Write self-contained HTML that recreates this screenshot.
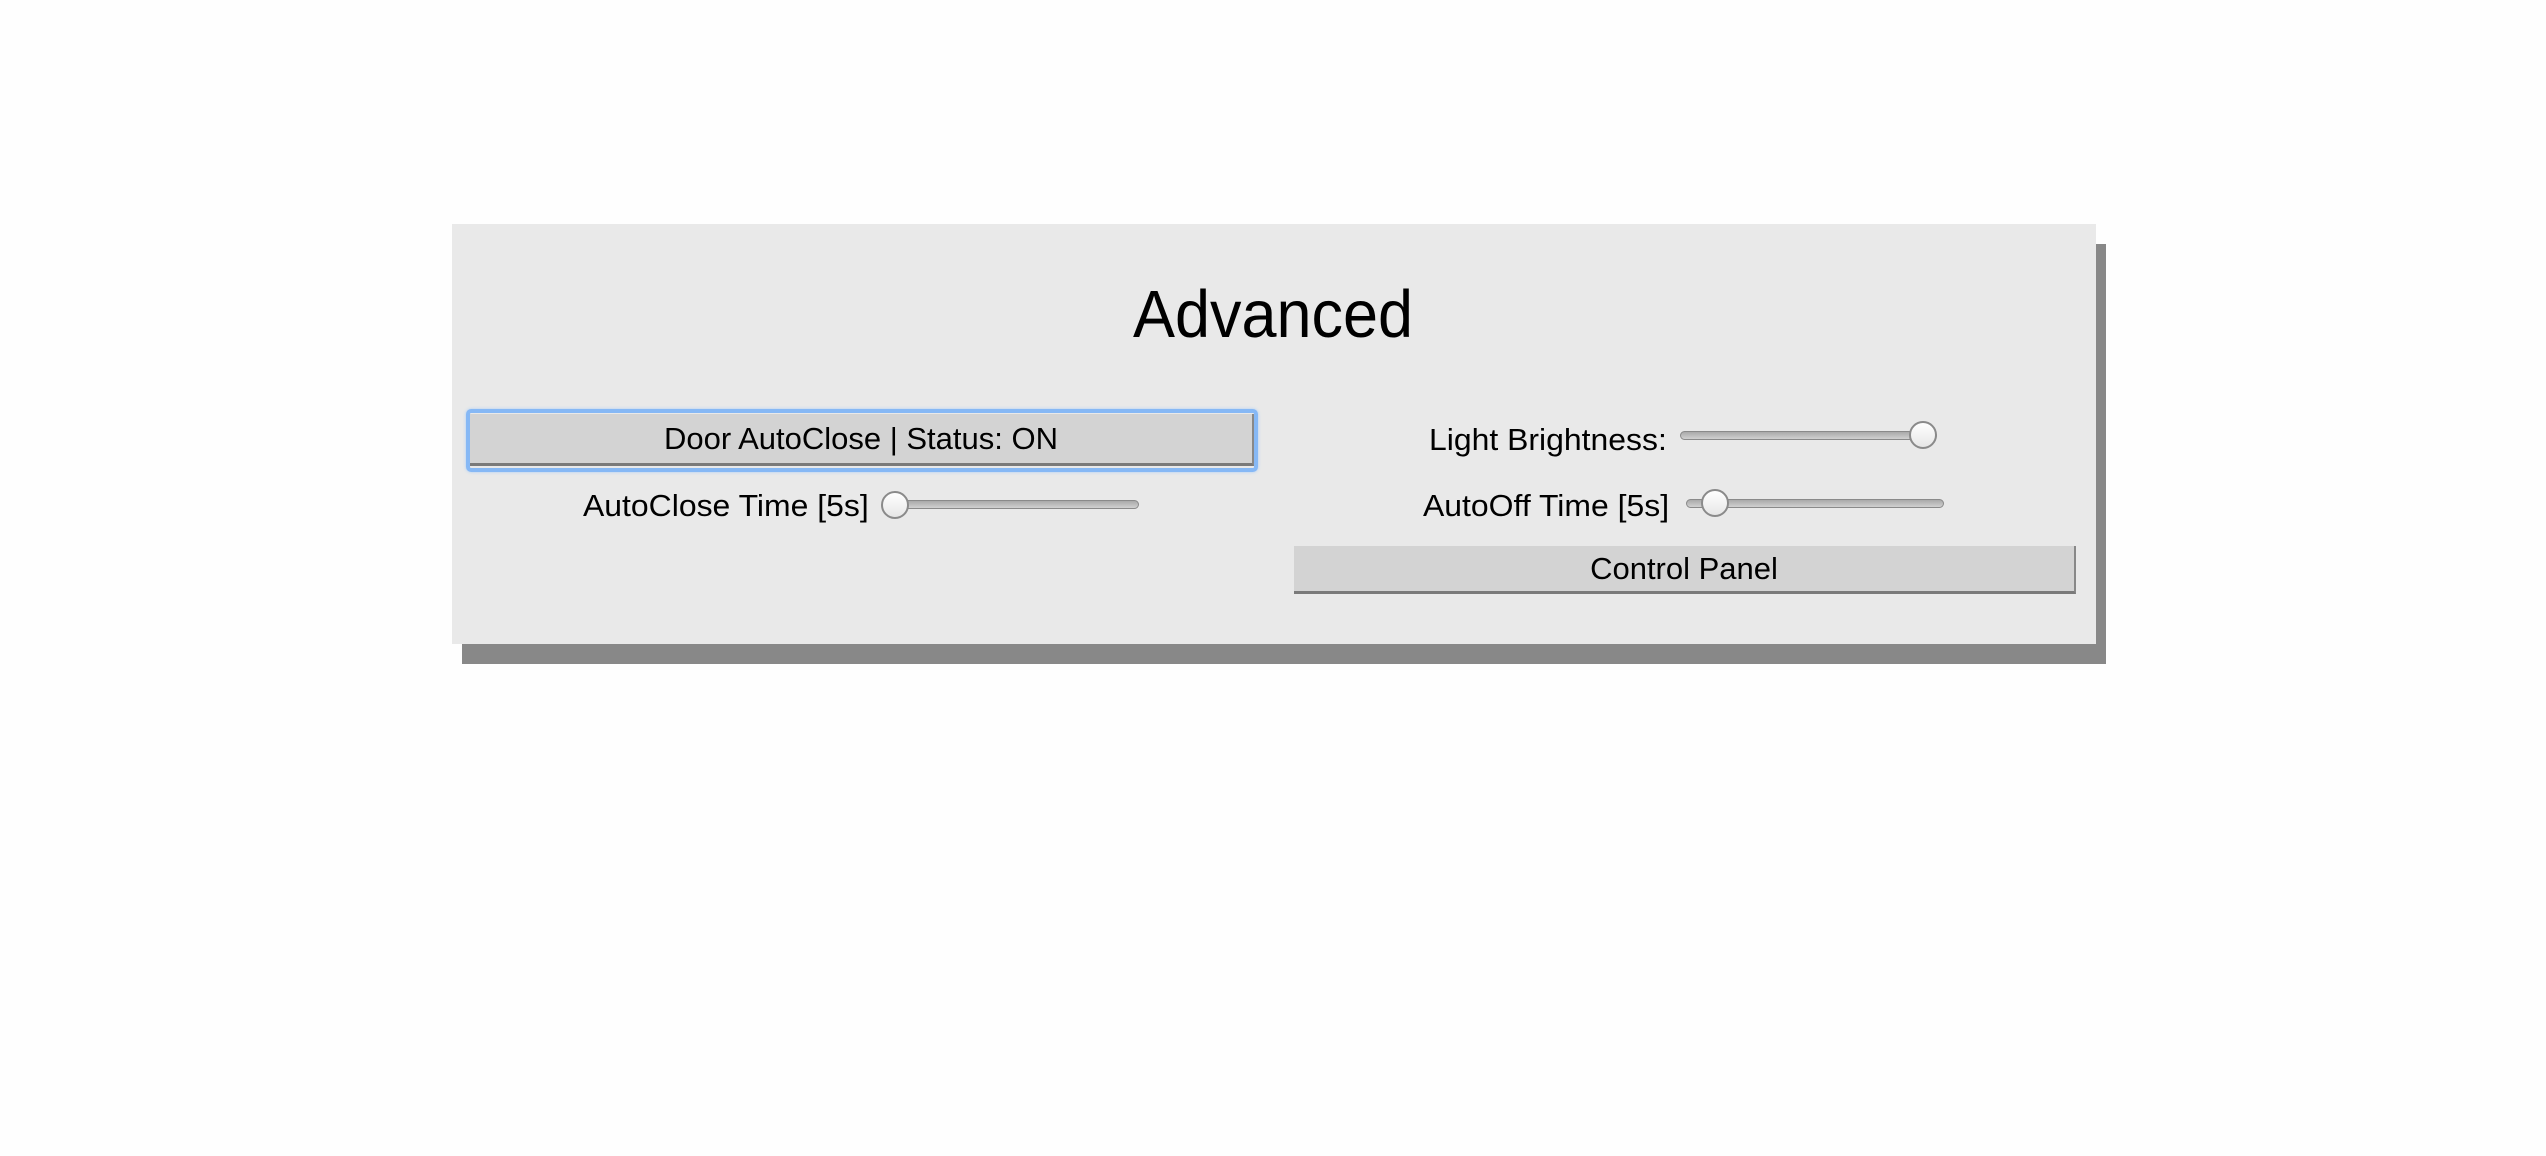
<!DOCTYPE html>
<html><head><style>
body{margin:0;width:2546px;height:1156px;background:#fefefe;position:relative;overflow:hidden;font-family:"Liberation Sans",sans-serif;color:#000}
.a{position:absolute}
.shadow{left:462px;top:244px;width:1644px;height:420px;background:#888}
.panel{left:452px;top:224px;width:1644px;height:420px;background:#e9e9e9}
.t{white-space:nowrap;line-height:1}
.btn{background:#d3d3d3;border-right:2px solid #888;border-bottom:3px solid #7a7a7a;box-sizing:border-box;text-align:center;font-size:31px}
.track{height:9px;border-radius:5px;background:linear-gradient(#a9a9a9,#d0d0d0);border:1px solid #8a8a8a;box-sizing:border-box}
.thumb{width:28px;height:28px;border-radius:50%;background:linear-gradient(#fff,#e6e6e6);border:2px solid #8a8a8a;box-sizing:border-box}
</style></head><body>
<div class="a shadow"></div>
<div class="a panel"></div>
<div class="a t" style="left:973px;width:600px;text-align:center;top:281px;font-size:67px;transform:scaleX(0.94)">Advanced</div>

<div class="a" style="left:466px;top:409px;width:792px;height:63px;border:4px solid #86b8f5;border-radius:5px;box-sizing:border-box;box-shadow:0 0 3px #a9cdf8"></div>
<div class="a btn" style="left:470px;top:414px;width:784px;height:52px;line-height:50px">Door AutoClose | Status: ON</div>

<div class="a t" style="left:583px;top:490px;font-size:31px;transform-origin:left;transform:scaleX(1.03)">AutoClose Time [5s]</div>
<div class="a track" style="left:882px;top:500px;width:257px"></div>
<div class="a thumb" style="left:881px;top:491px"></div>

<div class="a t" style="left:1429px;top:424px;font-size:31px;transform-origin:left;transform:scaleX(1.03)">Light Brightness:</div>
<div class="a track" style="left:1680px;top:431px;width:257px"></div>
<div class="a thumb" style="left:1909px;top:421px"></div>

<div class="a t" style="left:1423px;top:490px;font-size:31px;transform-origin:left;transform:scaleX(1.03)">AutoOff Time [5s]</div>
<div class="a track" style="left:1686px;top:499px;width:258px"></div>
<div class="a thumb" style="left:1701px;top:489px"></div>

<div class="a btn" style="left:1294px;top:546px;width:782px;height:48px;line-height:46px">Control Panel</div>
</body></html>
